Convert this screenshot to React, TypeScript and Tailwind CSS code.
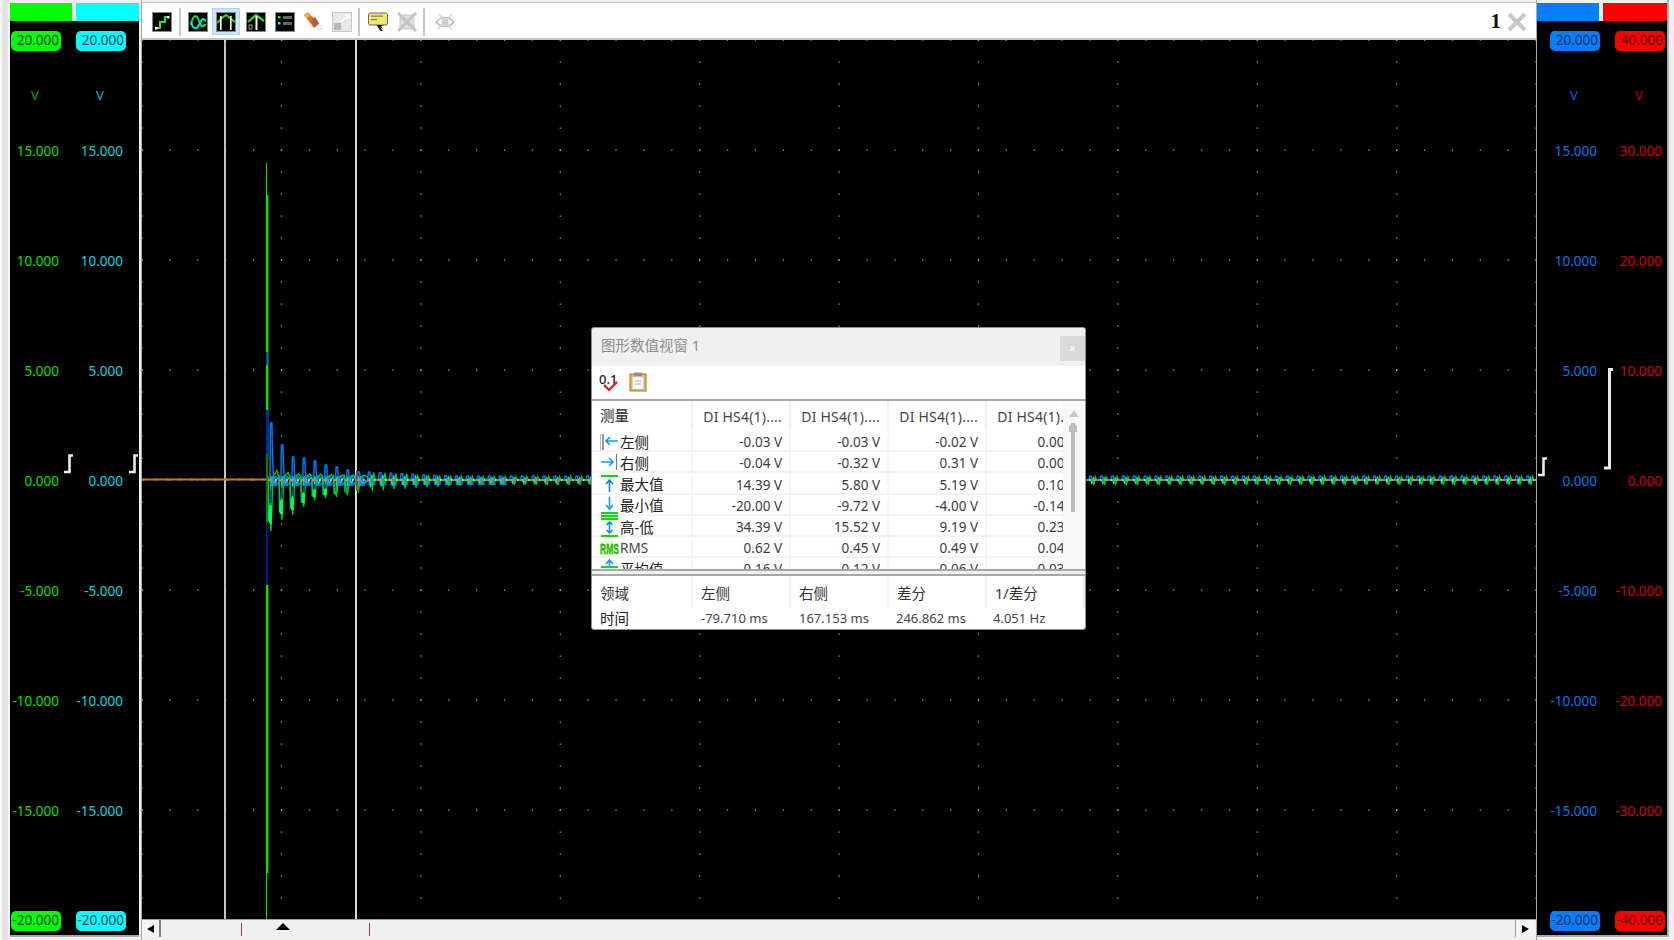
import React from "react";

const FONT = "font-['Noto_Sans','Noto_Sans_CJK_SC',sans-serif]";

const UP = [57, 35, 23, 22, 19, 15, 13, 10, 8];
const DOWN = [51, 40, 35, 27, 20, 18, 17, 15, 11];
const cycles = Array.from({ length: 116 }, (_, k) => ({
  k,
  x: 270 + 10.93 * k,
  up: k < UP.length ? UP[k] : Math.max(4, 8 * Math.exp(-(k - 9) / 12)),
  down: k < DOWN.length ? DOWN[k] : Math.max(5, 11 * Math.exp(-(k - 9) / 12)),
}));

const bluePath =
  "M268 482 " +
  cycles
    .map((c) =>
      c.k < 9
        ? `L${c.x - 3} 484 L${c.x} 480 L${c.x + 0.5} ${480 - c.up} L${c.x + 2} ${480 - c.up} L${c.x + 2.5} ${480 - c.up * 0.4} L${c.x + 4} 485 L${c.x + 7} 484`
        : `L${c.x - 1} 480 L${c.x} ${480 - c.up} L${c.x + 1.5} ${480 - c.up} L${c.x + 2.5} ${480 + c.up * 0.8} L${c.x + 4} ${480 + c.up * 0.8} L${c.x + 5} 480 L${c.x + 9.9} 480`
    )
    .join(" ");
const greenPath =
  "M268 480 " +
  cycles
    .map((c) =>
      c.k < 9
        ? `L${c.x - 2} 477 L${c.x - 1} ${480 + c.down * 0.5} L${c.x + 1} ${480 + c.down} L${c.x + 2} ${480 + c.down * 0.5} L${c.x + 3} 477 L${c.x + 7} ${476 - c.up * 0.1}`
        : `L${c.x + 3} 480 L${c.x + 4} ${480 + c.down} L${c.x + 5.5} ${480 - c.down * 0.7} L${c.x + 7} 480 L${c.x + 10} 480`
    )
    .join(" ");
const cyanPath =
  "M268 480 " +
  cycles
    .map((c) =>
      c.k < 9
        ? `L${c.x - 2} 476 L${c.x - 1.5} ${480 + c.down * 0.8} L${c.x + 0.5} ${480 + c.down * 0.8} L${c.x + 1} 478 L${c.x + 5} 483`
        : `L${c.x + 1} 480 L${c.x + 2} ${480 + c.down * 0.6} L${c.x + 3.5} ${480 - c.down * 0.5} L${c.x + 5} 480 L${c.x + 10} 480`
    )
    .join(" ");

const gridDots: { x: number; y: number }[] = [];
for (let i = 0; i <= 10; i++) {
  for (let s = 0; s <= 40; s++) gridDots.push({ x: 142 + 139.4 * i, y: 40 + 22 * s });
}
for (let j = 0; j <= 8; j++) {
  for (let s = 0; s <= 50; s++) gridDots.push({ x: 142 + 27.88 * s, y: 40 + 110 * j });
}

function Chart() {
  return (
    <svg viewBox="142 40 1394 879" className="block h-full w-full">
      {gridDots.map((d, i) => (
        <rect key={i} x={d.x - 0.5} y={d.y - 0.5} width="1.2" height="1.2" fill="#b8b8b8" />
      ))}
      <rect x="224" y="40" width="2" height="879" fill="#c4c4c4" />
      <rect x="355" y="40" width="2" height="879" fill="#d8d8d8" />
      <line x1="142" y1="479.5" x2="268" y2="479.5" stroke="#b8801c" strokeWidth="2" />
      <line x1="142" y1="479.5" x2="268" y2="479.5" stroke="#e06030" strokeWidth="2" strokeDasharray="3 9" />
      {cycles.slice(0, 22).map((c) => (
        <rect key={c.k} x={c.x} y={c.k < 9 ? 476 : 478} width="7" height={c.k < 9 ? 10 : 7} fill="#0070f0" />
      ))}
      <path d={bluePath} fill="none" stroke="#0078f0" strokeWidth="1.5" />
      <path d={cyanPath} fill="none" stroke="#00d8e8" strokeWidth="1.1" />
      <path d={greenPath} fill="none" stroke="#00d000" strokeWidth="1.3" />
      {cycles.slice(0, 6).map((c, i) => (
        <g key={i}>
          <rect x={c.x - 1} y={480 + c.down * 0.5} width="3" height={c.down * 0.35} fill="#00ff50" />
          <rect x={c.x + 0.2} y={480 + c.down * 0.2} width="1.5" height={c.down * 0.25} fill="#0030d0" />
        </g>
      ))}
      <line x1="268" y1="480" x2="1536" y2="480" stroke="#e8a020" strokeWidth="1.5" strokeDasharray="5 6" />
      <line x1="271" y1="480" x2="1536" y2="480" stroke="#d040e0" strokeWidth="1.5" strokeDasharray="3 8" />
      <line x1="275" y1="480" x2="1536" y2="480" stroke="#f0f0a0" strokeWidth="1.5" strokeDasharray="1.5 9.5" />
      {/* main spike */}
      <rect x="266" y="163" width="1" height="32" fill="#00e800" />
      <rect x="266" y="195" width="2.4" height="215" fill="#00e800" />
      <rect x="266" y="352" width="1.5" height="13" fill="#0030d0" />
      <rect x="266" y="410" width="1.5" height="110" fill="#0020b0" />
      <rect x="267.5" y="410" width="1" height="50" fill="#0060d0" />
      <rect x="266" y="453" width="2" height="70" fill="#008000" />
      <rect x="266" y="523" width="1.5" height="62" fill="#0020c0" />
      <rect x="266" y="585" width="2.4" height="288" fill="#00e800" />
      <rect x="266" y="873" width="1" height="46" fill="#00e800" />
      <rect x="356" y="471" width="1" height="20" fill="#e02010" />
    </svg>
  );
}

function IconBox({ children, faded }: { children: React.ReactNode; faded?: boolean }) {
  return (
    <svg viewBox="0 0 20 20" className="h-5 w-5 shrink-0" style={faded ? { opacity: 0.3 } : undefined}>
      {children}
    </svg>
  );
}

const blackBox = <rect x="0.5" y="0.5" width="19" height="19" fill="#000" stroke="#888" />;

const StepIcon = () => (
  <IconBox>
    {blackBox}
    <path d="M4 16H8V10H13V5H16" fill="none" stroke="#2fe02f" strokeWidth="2" />
    <rect x="3" y="15" width="2.5" height="2.5" fill="#fff" />
    <rect x="15" y="4" width="2.5" height="2.5" fill="#fff" />
  </IconBox>
);
const WaveIcon = () => (
  <IconBox>
    {blackBox}
    <path d="M3 13C5 2 9 2 11 9S15 15 18 12" fill="none" stroke="#00e060" strokeWidth="2" />
    <path d="M3 10C5 18 9 18 12 11S16 8 18 9" fill="none" stroke="#00e0e0" strokeWidth="2" />
  </IconBox>
);
const CursorIcon = () => (
  <IconBox>
    {blackBox}
    <path d="M1 11L6 6L10 3L14 6L19 10" fill="none" stroke="#20e020" strokeWidth="2" />
    <rect x="4" y="4" width="1.6" height="14" fill="#fff" />
    <rect x="14" y="4" width="1.6" height="14" fill="#fff" />
  </IconBox>
);
const ZeroCursorIcon = () => (
  <IconBox>
    {blackBox}
    <path d="M2 10L10 3L18 9" fill="none" stroke="#20e020" strokeWidth="2.2" />
    <rect x="9.5" y="4" width="2" height="14" fill="#fff" />
    <rect x="3" y="13" width="3" height="4" fill="none" stroke="#bbb" strokeWidth="0.8" />
  </IconBox>
);
const LegendIcon = () => (
  <IconBox>
    {blackBox}
    <rect x="3" y="4" width="2.5" height="2.5" fill="#20f020" />
    <rect x="3" y="10" width="2.5" height="2.5" fill="#20e0f0" />
    <rect x="8" y="4" width="9" height="3" fill="#666" />
    <rect x="8" y="10" width="9" height="3" fill="#666" />
  </IconBox>
);
const EraserIcon = () => (
  <IconBox>
    <path d="M1 3L5 0L16 12L11 16Z" fill="#e07028" />
    <path d="M1 3L5 0L8 3L4 6Z" fill="#f0b040" />
    <path d="M8 8L12 5L16 11L11 15Z" fill="#b85848" />
    <path d="M13 15L15 18L19 16L18 13" fill="none" stroke="#bbb" strokeDasharray="1.5 1" />
  </IconBox>
);
const ResizeIcon = () => (
  <IconBox>
    <rect x="0.5" y="0.5" width="19" height="19" fill="#e8e8e8" stroke="#c8c8c8" />
    <rect x="2" y="11" width="7" height="7" fill="#b8b8b8" />
    <path d="M9 10L17 3M13 3H17V7" fill="none" stroke="#fff" strokeWidth="1.5" />
  </IconBox>
);
const CommentIcon = () => (
  <IconBox>
    <rect x="0.5" y="1" width="19" height="12" rx="2" fill="#f4e860" stroke="#666" />
    <rect x="3" y="3.5" width="12" height="1.2" fill="#777" />
    <rect x="3" y="7" width="6" height="1.2" fill="#777" />
    <path d="M8 13L15 17L13 14L17 13Z" fill="#111" />
    <path d="M10 14L14 19" stroke="#111" strokeWidth="2" />
  </IconBox>
);
const CrossBoxIcon = () => (
  <IconBox>
    <rect x="3" y="3" width="14" height="14" fill="#e0e0e0" stroke="#c8c8c8" />
    <path d="M1 1L19 19M19 1L1 19" stroke="#c4c4c4" strokeWidth="3" />
  </IconBox>
);
const EyeIcon = () => (
  <IconBox>
    <path d="M1 10C6 4 14 4 19 10C14 16 6 16 1 10Z" fill="#f0f0f0" stroke="#bdbdbd" strokeWidth="1.4" />
    <circle cx="10" cy="10" r="3" fill="#c4c4c4" />
    <path d="M3 17L17 2M4 2L17 18" stroke="#d0d0d0" strokeWidth="1.4" />
  </IconBox>
);

function Toolbar() {
  const Sep = ({ className }: { className: string }) => <div className={`h-7 w-[2px] bg-[#c8c8c8] ${className}`} />;
  return (
    <div className="box-border flex h-[38px] items-center border-t border-b-2 border-[#c4c4c4] bg-white pl-[10px] pr-[9px] pt-[2px]">
      <StepIcon />
      <Sep className="ml-[7px]" />
      <div className="ml-[7px]">
        <WaveIcon />
      </div>
      <div className="ml-1 box-border flex h-[27px] w-7 items-center justify-center border border-[#a8d6fb] bg-[#cce4f7]">
        <CursorIcon />
      </div>
      <div className="ml-[6px]">
        <ZeroCursorIcon />
      </div>
      <div className="ml-[9px]">
        <LegendIcon />
      </div>
      <div className="ml-2">
        <EraserIcon />
      </div>
      <div className="ml-[9px]">
        <ResizeIcon />
      </div>
      <Sep className="ml-[6px]" />
      <div className="ml-[8px]">
        <CommentIcon />
      </div>
      <div className="ml-[9px]">
        <CrossBoxIcon />
      </div>
      <Sep className="ml-[6px]" />
      <div className="ml-[10px]">
        <EyeIcon />
      </div>
      <span className="ml-auto font-['Liberation_Serif',serif] text-[21px] font-bold leading-none text-[#111]">1</span>
      <svg viewBox="0 0 20 20" className="ml-[6px] h-5 w-5">
        <path d="M2 2L18 18M18 2L2 18" stroke="#c8c8c8" strokeWidth="4" />
      </svg>
    </div>
  );
}

function ScrollBar() {
  return (
    <div className="box-border flex h-[18px] border-t border-[#a0a0a0] bg-[#f0f0f0]">
      <div className="flex w-[19px] items-center justify-center border-r-2 border-[#808080] bg-[#f4f4f4]">
        <div className="h-0 w-0 border-y-[4px] border-r-[7px] border-y-transparent border-r-black" />
      </div>
      <div className="relative flex-1">
        <div className="absolute left-[80px] top-[3px] h-[13px] w-[1px] bg-[#f02020]" />
        <div className="absolute left-[208px] top-[3px] h-[13px] w-[1px] bg-[#f02020]" />
        <div className="absolute left-[115px] top-[3px] h-0 w-0 border-x-[7px] border-b-[7px] border-x-transparent border-b-black" />
      </div>
      <div className="mr-[1px] flex w-[20px] items-center justify-center border-l border-[#a0a0a0] bg-[#f4f4f4]">
        <div className="h-0 w-0 border-y-[4px] border-l-[7px] border-y-transparent border-l-black" />
      </div>
    </div>
  );
}

type Axis = {
  labels: string[];
  bottom: string;
  top: string;
  colW: string;
  pill: string;
  tick: string;
  unit: string;
  pillWrap: string;
  unitWrap: string;
};

function AxisColumn({ a }: { a: Axis }) {
  const Pill = ({ t }: { t: string }) => (
    <div className={`flex h-[38px] shrink-0 items-center ${a.pillWrap}`}>
      <div className={`flex h-5 w-[50px] shrink-0 items-center justify-end whitespace-nowrap rounded-[5px] pr-[2px] text-[13.5px] leading-none ${a.pill}`}>
        {t}
      </div>
    </div>
  );
  return (
    <div className={`flex shrink-0 flex-col pt-[1px] ${a.colW}`}>
      <Pill t={a.top} />
      <div className={`flex h-[72px] shrink-0 items-center text-[13px] ${a.unit} ${a.unitWrap}`}>V</div>
      <div className="flex shrink-0 flex-col gap-[72px]">
        {a.labels.map((l) => (
          <div key={l} className={`flex h-[38px] shrink-0 items-center justify-end text-[13.5px] ${a.tick}`}>
            {l}
          </div>
        ))}
        <Pill t={a.bottom} />
      </div>
    </div>
  );
}

const seq = (m: number) => [15, 10, 5, 0, -5, -10, -15].map((v) => (v * m).toFixed(3));

const axisGreen: Axis = {
  labels: seq(1), top: "20.000", bottom: "-20.000", colW: "w-[62px] pr-[13px]",
  pill: "bg-[#00ff00] text-[#004000]", tick: "text-[#00e000]", unit: "text-[#00b000]", pillWrap: "pl-[1px]", unitWrap: "pl-[21px]",
};
const axisCyan: Axis = {
  labels: seq(1), top: "20.000", bottom: "-20.000", colW: "w-[63px] pr-[16px]",
  pill: "bg-[#00ffff] text-[#004050]", tick: "text-[#00d8e0]", unit: "text-[#00b8d0]", pillWrap: "", unitWrap: "pl-[20px]",
};
const axisBlue: Axis = {
  labels: seq(1), top: "20.000", bottom: "-20.000", colW: "w-[62px] pr-[2px]",
  pill: "bg-[#0080ff] text-[#002860]", tick: "text-[#0078e8]", unit: "text-[#0068d8]", pillWrap: "pl-[13px]", unitWrap: "pl-[33px]",
};
const axisRed: Axis = {
  labels: seq(2), top: "40.000", bottom: "-40.000", colW: "w-[64px] pr-[5px]",
  pill: "bg-[#ff0000] text-[#500000]", tick: "text-[#d80000]", unit: "text-[#c80000]", pillWrap: "pl-[12px]", unitWrap: "pl-[32px]",
};

const Glyph = ({ className }: { className: string }) => (
  <svg viewBox="0 0 11 20" className={`absolute h-5 w-[11px] ${className}`}>
    <path d="M10 1.5H6.5V18H1" fill="none" stroke="#ecece4" strokeWidth="2.6" />
  </svg>
);

const Arrow = ({ d, color = "#0a9cff" }: { d: string; color?: string }) => <path d={d} fill="none" stroke={color} strokeWidth="1.6" />;
const GBar = ({ y }: { y: number }) => <rect x="1" y={y} width="17" height="2.2" fill="#14d414" />;

const rowIcons: React.ReactNode[] = [
  <>
    <rect x="0" y="1" width="1" height="16" fill="#bbb" />
    <rect x="2.5" y="1" width="1" height="16" fill="#333" />
    <Arrow d="M18 8H6M10 4L6 8L10 12" />
  </>,
  <>
    <Arrow d="M1 8H13M9 4L13 8L9 12" />
    <rect x="16" y="0" width="1" height="16" fill="#777" />
  </>,
  <>
    <GBar y={0} />
    <Arrow d="M9.5 17V5M6 9L9.5 5L13 9" color="#0a80f0" />
  </>,
  <>
    <Arrow d="M9.5 0V11M6 8L9.5 12L13 8" />
    <GBar y={15} />
    <GBar y={18} />
  </>,
  <>
    <GBar y={0} />
    <Arrow d="M9.5 4V15M6.5 7L9.5 4L12.5 7M6.5 12L9.5 15L12.5 12" color="#1090e0" />
    <GBar y={17} />
  </>,
  <>
    <rect x="0" y="2" width="19" height="14" fill="#d8f8a0" opacity="0.5" />
    <text x="0" y="15" fontSize="15" fontWeight="700" textLength="19" lengthAdjust="spacingAndGlyphs" fill="#20d010" stroke="#108008" strokeWidth="0.3" fontFamily="Liberation Sans">
      RMS
    </text>
  </>,
  <>
    <Arrow d="M9.5 0V8M6 4L9.5 0L13 4" />
    <GBar y={6} />
  </>,
];

const rows = [
  ["左侧", "-0.03 V", "-0.03 V", "-0.02 V", "0.00 V"],
  ["右侧", "-0.04 V", "-0.32 V", "0.31 V", "0.00 V"],
  ["最大值", "14.39 V", "5.80 V", "5.19 V", "0.10 V"],
  ["最小值", "-20.00 V", "-9.72 V", "-4.00 V", "-0.14 V"],
  ["高-低", "34.39 V", "15.52 V", "9.19 V", "0.23 V"],
  ["RMS", "0.62 V", "0.45 V", "0.49 V", "0.04 V"],
  ["平均值", "0.16 V", "0.12 V", "0.06 V", "0.03 V"],
];

const gridCols = "grid grid-cols-[101px_98px_98px_98px_98px]";

function Dialog() {
  return (
    <div className={`absolute left-[449px] top-[287px] box-border flex h-[303px] w-[495px] flex-col overflow-hidden rounded-[3px] border border-[#909090] bg-white ${FONT}`}>
      <div className="flex h-[38px] shrink-0 items-center justify-between bg-[#f0f0f0] pl-[9px]">
        <span className="mb-[2px] text-[14.5px] text-[#8c8c8c]">图形数值视窗 1</span>
        <div className="mt-[3px] flex h-[25px] w-[25px] items-center justify-center bg-[#d9d9d9] text-[12px] text-white">×</div>
      </div>
      <div className="flex h-[33px] shrink-0 items-center gap-[10px] pb-[2px] pl-[7px]">
        <div className="relative h-[22px] w-5">
          <span className="absolute left-0 top-[-2px] text-[13px] font-medium leading-[20px] text-[#222]">0.1</span>
          <svg viewBox="0 0 20 22" className="absolute inset-0 h-[22px] w-5">
            <path d="M5 14L10 19L18 11" fill="none" stroke="#e01818" strokeWidth="2.2" />
          </svg>
        </div>
        <svg viewBox="0 0 18 20" className="h-5 w-[18px]">
          <rect x="1" y="2" width="16" height="17" fill="#e8b060" stroke="#b07830" />
          <rect x="3.5" y="5" width="11" height="12" fill="#fff" stroke="#ccc" strokeWidth="0.5" />
          <rect x="5" y="0.5" width="8" height="3.5" fill="#909090" />
          <path d="M6 9H12M6 12H12" stroke="#aaa" />
        </svg>
      </div>
      <div className="flex h-[172px] shrink-0 overflow-hidden border-y-2 border-[#a4a8ac]">
        <div className="w-[471px] shrink-0 overflow-hidden">
          <div className={`${gridCols} h-[30px] text-[14px] tracking-[0.2px] text-[#444]`}>
            <div className="flex items-center border-r-2 border-[#f0f0f0] pl-[8px] text-[14.5px] tracking-normal text-[#222]">测量</div>
            {[0, 1, 2, 3].map((i) => (
              <div key={i} className="flex items-center justify-end whitespace-nowrap border-r-2 border-[#f0f0f0] pr-[7px]">
                DI HS4(1)....
              </div>
            ))}
          </div>
          {rows.map((r, i) => (
            <div key={i} className={`${gridCols} h-[21.2px] border-b-2 border-[#f4f4f4] pt-[2px] text-[13.5px] leading-none text-[#3c3c3c]`}>
              <div className="flex items-center whitespace-nowrap border-r-2 border-[#f4f4f4] pl-[8px] text-[14.5px] text-[#222]">
                <svg viewBox="0 0 20 20" className="h-5 w-5 shrink-0 overflow-visible">
                  {rowIcons[i]}
                </svg>
                <span className={i === 5 ? "text-[13.5px] text-[#444]" : "mb-[2px]"}>{r[0]}</span>
              </div>
              {r.slice(1).map((v, j) => (
                <div key={j} className="flex items-center justify-end whitespace-nowrap border-r-2 border-[#f4f4f4] pr-[7px]">
                  {v}
                </div>
              ))}
            </div>
          ))}
        </div>
        <div className="relative flex-1 bg-[#f8f8f8]">
          <div className="absolute left-[6px] top-[9px] h-0 w-0 border-x-[5px] border-b-[7px] border-x-transparent border-b-[#c8c8c8]" />
          <div className="absolute left-[8px] top-[22px] h-[89px] w-[4px] bg-[#bdbdbd]" />
          <div className="absolute left-[6px] top-[23px] h-[8px] w-[8px] rounded-t-sm bg-[#bdbdbd]" />
        </div>
      </div>
      <div className="h-[5px] shrink-0 border-b-2 border-[#a4a8ac] bg-[#f0f0f0]" />
      <div className="min-h-0 flex-1">
        <div className="grid h-[32px] grid-cols-[101px_98px_98px_98px_1fr] text-[14.5px] text-[#333]">
          {["领域", "左侧", "右侧", "差分", "1/差分"].map((h) => (
            <div key={h} className="flex items-center border-r-2 border-[#f0f0f0] pl-[8px] pt-[4px]">
              {h}
            </div>
          ))}
        </div>
        <div className="grid h-[22px] grid-cols-[101px_98px_98px_98px_1fr] items-center text-[13px] text-[#444]">
          <div className="pl-[8px] text-[14.5px] text-[#222]">时间</div>
          <div className="pl-[8px]">-79.710 ms</div>
          <div className="pl-[8px]">167.153 ms</div>
          <div className="pl-[7px]">246.862 ms</div>
          <div className="pl-[6px]">4.051 Hz</div>
        </div>
      </div>
    </div>
  );
}

export default function App() {
  return (
    <div className={`flex h-[940px] w-[1674px] overflow-hidden bg-[#f0f0f0] ${FONT}`}>
      {/* window frame */}
      <div className="box-border h-full w-[10px] shrink-0 border-l-2 border-r-2 border-l-[#fafafa] border-r-[#f6f6f6] bg-[#e4e4e4]" />

      {/* left axes */}
      <div className="flex h-[937px] w-[129px] shrink-0 flex-col pt-[3px]">
        <div className="flex h-[18px] shrink-0 gap-1">
          <div className="w-[62px] bg-[#00ff00]" />
          <div className="w-[63px] bg-[#00ffff]" />
        </div>
        <div className="relative flex flex-1 gap-1 overflow-hidden border-b-2 border-[#a8a8a8] bg-black">
          <AxisColumn a={axisGreen} />
          <AxisColumn a={axisCyan} />
          <Glyph className="left-[53px] top-[433px]" />
          <Glyph className="left-[118px] top-[433px]" />
        </div>
      </div>

      {/* centre */}
      <div className="ml-[2px] flex w-[1396px] shrink-0 flex-col border-x border-[#a8a8a8] pt-[2px]">
        <Toolbar />
        <div className="relative h-[879px] bg-black">
          <Chart />
          <Dialog />
        </div>
        <ScrollBar />
      </div>

      {/* right axes */}
      <div className="box-border flex h-[937px] w-[132px] shrink-0 flex-col border-r-2 border-[#a8b0b8] pt-[3px]">
        <div className="flex h-[18px] shrink-0 gap-1">
          <div className="w-[62px] bg-[#0080ff]" />
          <div className="w-[64px] bg-[#ff0000]" />
        </div>
        <div className="relative flex flex-1 gap-1 overflow-hidden border-b-2 border-[#a8a8a8] bg-black">
          <AxisColumn a={axisBlue} />
          <AxisColumn a={axisRed} />
          <Glyph className="left-0 top-[436px]" />
          <svg viewBox="0 0 11 102" className="absolute left-[66px] top-[347px] h-[102px] w-[11px]">
            <path d="M10 1.5H6.5V100H1" fill="none" stroke="#ecece4" strokeWidth="3" />
          </svg>
        </div>
      </div>
    </div>
  );
}
